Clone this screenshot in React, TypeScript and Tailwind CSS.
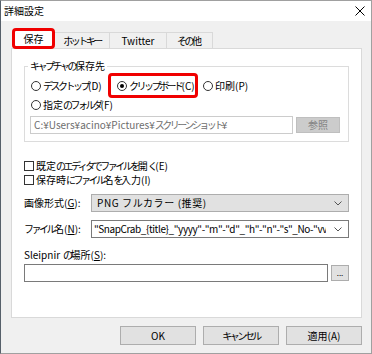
import React from "react";

function J({ t }: { t: string }) {
  const parts = t.split(/([\u3041-\u30ff]+)/);
  return (
    <>
      {parts.map((p, i) =>
        /[\u3041-\u30ff]/.test(p) ? (
          <span key={i} className="tracking-[-2.5px]">
            {p}
          </span>
        ) : (
          <React.Fragment key={i}>{p}</React.Fragment>
        )
      )}
    </>
  );
}

function Radio({ checked, label }: { checked?: boolean; label: string }) {
  return (
    <div className="flex items-center gap-[2px]">
      <span className="w-[10px] h-[10px] rounded-full border border-[#333333] bg-white flex items-center justify-center shrink-0">
        {checked && <span className="w-[4px] h-[4px] rounded-full bg-black" />}
      </span>
      <span className="whitespace-nowrap">
        <J t={label} />
      </span>
    </div>
  );
}

function Check({ label }: { label: string }) {
  return (
    <div className="h-[14px] flex items-center gap-[2px]">
      <span className="w-[10px] h-[10px] border border-[#333333] bg-white shrink-0" />
      <span className="whitespace-nowrap">
        <J t={label} />
      </span>
    </div>
  );
}

function Chevron() {
  return (
    <svg width="8" height="5" viewBox="0 0 8 5" className="shrink-0">
      <path d="M0.5 0.5L4 4L7.5 0.5" fill="none" stroke="#555555" strokeWidth="1" />
    </svg>
  );
}

export default function App() {
  return (
    <div className="w-[372px] h-[354px] flex flex-col bg-[#f0f0f0] border border-[#a0a0a0] border-l-[#56606a] text-[10px] leading-[14px] text-black [font-family:'Noto_Sans_CJK_JP','Noto_Sans',sans-serif]">
      <div className="h-[20px] bg-white flex items-center justify-between pl-[3px] pr-[6px] shrink-0">
        <span>詳細設定</span>
        <svg width="10" height="10" viewBox="0 0 10 10">
          <path d="M0.5 0.5L9.5 9.5M9.5 0.5L0.5 9.5" stroke="#000000" strokeWidth="1" />
        </svg>
      </div>
      <div className="flex-1 flex flex-col pl-[10px] pr-[9px] pt-[7px]">
        <div className="flex items-end h-[20px] relative z-10">
          <div className="ml-[1px] w-[43px] h-[21px] mb-[-1px] border-[3px] border-[#f00000] rounded-[4px] bg-white flex items-center justify-center">
            保存
          </div>
          <div className="w-[55px] h-[16px] border-t border-r border-[#d9d9d9] flex items-center justify-center">
            <J t="ホットキー" />
          </div>
          <div className="w-[57px] h-[16px] border-t border-r border-[#d9d9d9] flex items-center justify-center">
            Twitter
          </div>
          <div className="w-[46px] h-[16px] border-t border-r border-[#d9d9d9] flex items-center justify-center">
            <J t="その他" />
          </div>
        </div>
        <div className="h-[270px] bg-white border border-[#d9d9d9] px-[12px] flex flex-col">
          <fieldset className="mt-[10px] border border-[#dcdcdc] pb-[7px]">
            <legend className="ml-[3px] px-[2px] leading-[14px]">
              <J t="キャプチャの保存先" />
            </legend>
            <div className="flex items-center h-[25px] pl-[6px]">
              <div className="w-[77px]">
                <Radio label="デスクトップ(D)" />
              </div>
              <div className="w-[90px] h-[25px] border-[3px] border-[#f00000] rounded-[4px] pl-[6px] flex items-center">
                <Radio checked label="クリップボード(C)" />
              </div>
              <div className="ml-[5px]">
                <Radio label="印刷(P)" />
              </div>
            </div>
            <div className="h-[14px] pl-[6px] flex items-center">
              <Radio label="指定のフォルダ(F)" />
            </div>
            <div className="flex items-center mt-[4px] pl-[5px] gap-[3px]">
              <div className="w-[263px] h-[18px] border border-[#cccccc] bg-white text-[#6d6d6d] px-[3px] flex items-center overflow-hidden whitespace-nowrap">
                <span>
                  <J t="C:¥Users¥acino¥Pictures¥スクリーンショット¥" />
                </span>
              </div>
              <div className="w-[44px] h-[16px] bg-[#cccccc] border border-[#bfbfbf] text-[#838383] flex items-center justify-center">
                参照
              </div>
            </div>
          </fieldset>
          <div className="mt-[17px]">
            <Check label="既定のエディタでファイルを開く(E)" />
            <Check label="保存時にファイル名を入力(I)" />
          </div>
          <div className="mt-[7px] flex items-center h-[18px]">
            <span className="w-[67px] whitespace-nowrap">
              画像形式(<span className="underline">G</span>):
            </span>
            <div className="flex-1 h-[18px] bg-[#e1e1e1] border border-[#adadad] flex items-center justify-between pl-[5px] pr-[6px]">
              <span className="tracking-[0.6px]">PNG フルカラー (推奨)</span>
              <Chevron />
            </div>
          </div>
          <div className="mt-[8px] flex items-center h-[18px]">
            <span className="w-[67px] whitespace-nowrap">
              <J t="ファイル名" />(<span className="underline">N</span>):
            </span>
            <div className="flex-1 min-w-0 h-[18px] bg-white border border-[#7a7a7a] flex items-center pl-[2px] pr-[6px] gap-[8px]">
              <span className="flex-1 min-w-0 overflow-hidden whitespace-nowrap tracking-[-0.4px]">
                "SnapCrab_{"{title}"}_"yyyy"-"m"-"d"_"h"-"n"-"s"_No-"vv"
              </span>
              <Chevron />
            </div>
          </div>
          <div className="mt-[10px] h-[14px] flex items-center whitespace-pre">
            <span className="mr-[3px]">Sleipnir</span>
            <J t="の" />
            <span>場所(<span className="underline">S</span>):</span>
          </div>
          <div className="mt-[2px] flex items-center gap-[3px]">
            <div className="w-[304px] h-[18px] bg-white border border-[#7a7a7a]" />
            <div className="w-[18px] h-[16px] bg-[#e1e1e1] border border-[#adadad] flex items-center justify-center text-[8px] leading-[8px]">
              ...
            </div>
          </div>
        </div>
        <div className="flex justify-end gap-[7px] mt-[8px]">
          <div className="w-[76px] h-[19px] bg-[#e1e1e1] border border-[#adadad] flex items-center justify-center">
            OK
          </div>
          <div className="w-[76px] h-[19px] bg-[#e1e1e1] border border-[#adadad] flex items-center justify-center">
            <J t="キャンセル" />
          </div>
          <div className="w-[76px] h-[19px] bg-[#e1e1e1] border border-[#adadad] flex items-center justify-center">
            適用(A)
          </div>
        </div>
      </div>
    </div>
  );
}
